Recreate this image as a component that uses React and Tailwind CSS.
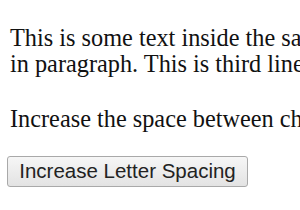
export default function App() {
  return (
    <div className="w-[300px] h-[210px] overflow-hidden bg-white pl-[10px] pt-[25px]">
      <p className="whitespace-nowrap text-[24.3px] leading-[26px] text-[#111] font-['Liberation_Serif',serif]">
        This is some text inside the same paragraph.<br />
        in paragraph. This is third line.
      </p>
      <p className="mt-[29px] whitespace-nowrap text-[24.3px] leading-[26px] text-[#111] font-['Liberation_Serif',serif]">
        Increase the space between characters.
      </p>
      <div className="mt-[24px] -ml-[3px]">
        <button className="h-[31px] w-[241px] rounded-[3px] border border-[#a9a9a9] bg-gradient-to-b from-[#f6f6f6] to-[#e3e3e3] text-[20.5px] text-[#222] font-['Liberation_Sans',sans-serif] leading-none">
          Increase Letter Spacing
        </button>
      </div>
    </div>
  );
}
